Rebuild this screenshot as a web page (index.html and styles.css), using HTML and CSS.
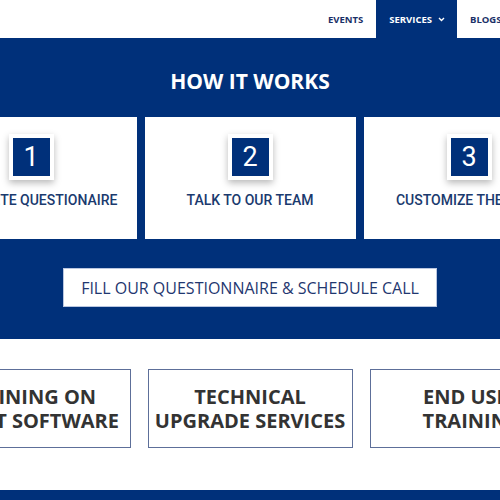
FILE: index.html
```html
<!DOCTYPE html>
<html>
<head>
<meta charset="utf-8">
<link rel="stylesheet" href="styles.css">
</head>
<body>
<nav class="nav">
  <a class="nav-item">EVENTS</a>
  <a class="nav-item active">SERVICES<svg class="chev" width="7" height="5" viewBox="0 0 7 5"><path d="M1 1l2.5 2.5L6 1" fill="none" stroke="#fff" stroke-width="1.4"/></svg></a>
  <a class="nav-item">BLOGS</a>
</nav>
<section class="how">
  <h2 class="how-title">HOW IT WORKS</h2>
  <div class="steps">
    <div class="step"><div class="num-frame"><div class="num">1</div></div><div class="step-label">COMPLETE QUESTIONAIRE</div></div>
    <div class="step"><div class="num-frame"><div class="num">2</div></div><div class="step-label">TALK TO OUR TEAM</div></div>
    <div class="step"><div class="num-frame"><div class="num">3</div></div><div class="step-label">CUSTOMIZE THE PLAN</div></div>
  </div>
  <div class="cta-row"><a class="cta">FILL OUR QUESTIONNAIRE &amp; SCHEDULE CALL</a></div>
</section>
<section class="services">
  <div class="svc">TRAINING ON<br>CLIENT SOFTWARE</div>
  <div class="svc">TECHNICAL<br>UPGRADE SERVICES</div>
  <div class="svc">END USER<br>TRAINING</div>
</section>
<footer class="foot"></footer>
</body>
</html>
```
FILE: styles.css
```css
html, body {
  margin: 0;
  padding: 0;
  width: 500px;
  height: 500px;
  overflow: hidden;
  background: #fff;
}
.nav {
  height: 38px;
  display: flex;
  padding-left: 315px;
  white-space: nowrap;
  font-family: "Open Sans", sans-serif;
  font-size: 9.5px;
  font-weight: bold;
  color: #1a3068;
  overflow: hidden;
}
.nav-item {
  display: flex;
  align-items: center;
  padding: 0 13px;
  height: 38px;
  flex: none;
}
.nav-item.active {
  background: #00307a;
  color: #fff;
  padding-right: 12px;
}
.chev {
  margin-left: 6px;
}
.how {
  background: #00307a;
  height: 301px;
  padding-top: 1px;
  box-sizing: border-box;
  overflow: hidden;
}
.how-title {
  margin: 28px 0 0;
  height: 28px;
  line-height: 28px;
  text-align: center;
  color: #fff;
  font-family: "Open Sans", sans-serif;
  font-weight: bold;
  font-size: 21px;
}
.steps {
  margin-top: 22px;
  display: flex;
  justify-content: center;
  gap: 8px;
}
.step {
  flex: none;
  width: 211px;
  height: 122px;
  background: #fff;
  display: flex;
  flex-direction: column;
  align-items: center;
  padding-top: 17px;
  box-sizing: border-box;
}
.num-frame {
  padding: 4px;
  background: #fff;
  box-shadow: 0 3px 7px rgba(0, 0, 0, 0.28);
}
.num {
  width: 37px;
  height: 38px;
  background: #00307a;
  color: #fff;
  font-family: Roboto, sans-serif;
  font-size: 27px;
  line-height: 38px;
  text-align: center;
}
.step-label {
  margin-top: 12px;
  font-family: Roboto, sans-serif;
  font-weight: 500;
  font-size: 14px;
  line-height: 17px;
  color: #1a3a6e;
  white-space: nowrap;
}
.cta-row {
  display: flex;
  justify-content: center;
  margin-top: 29px;
}
.cta {
  width: 374px;
  height: 39px;
  box-sizing: border-box;
  background: #fff;
  border: 1px solid #b9c6e0;
  display: flex;
  align-items: center;
  justify-content: center;
  font-family: "Open Sans", sans-serif;
  font-size: 16px;
  color: #1f3770;
}
.services {
  height: 151px;
  box-sizing: border-box;
  padding-top: 30px;
  display: flex;
  justify-content: center;
  gap: 17px;
}
.svc {
  flex: none;
  width: 205px;
  height: 79px;
  box-sizing: border-box;
  border: 1px solid #5d6f99;
  display: flex;
  align-items: center;
  justify-content: center;
  text-align: center;
  font-family: "Open Sans", sans-serif;
  font-weight: bold;
  font-size: 20px;
  line-height: 24px;
  color: #333;
  white-space: nowrap;
}
.foot {
  height: 20px;
  background: #00307a;
}
```
